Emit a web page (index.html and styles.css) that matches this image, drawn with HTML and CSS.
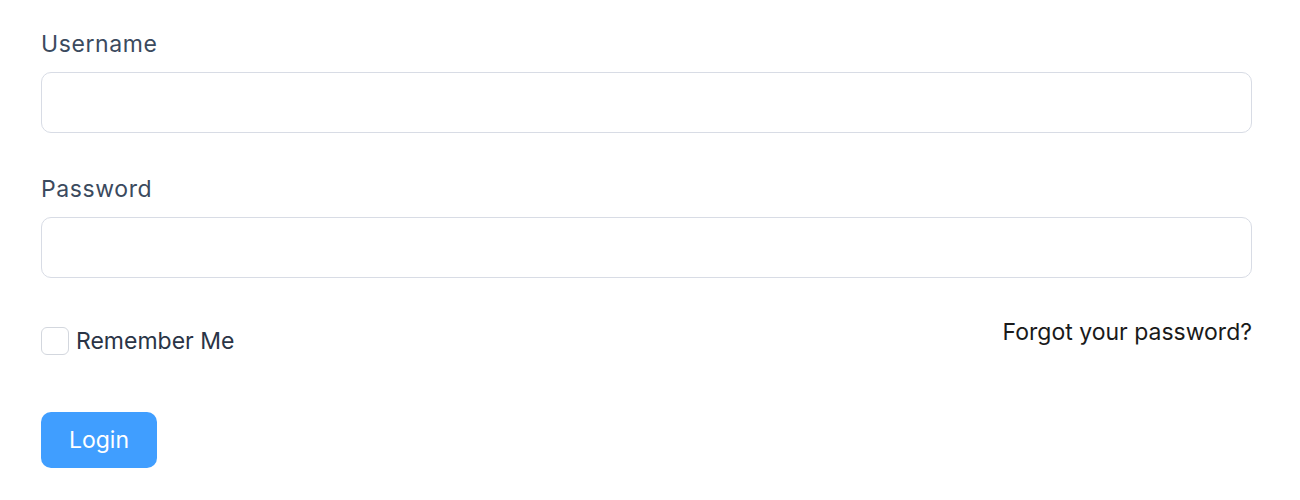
FILE: index.html
```html
<!DOCTYPE html>
<html>
<head>
<meta charset="utf-8">
<link rel="stylesheet" href="styles.css">
</head>
<body>
<form class="login">
  <div class="field">
    <label class="label">Username</label>
    <input class="input" type="text">
  </div>
  <div class="field">
    <label class="label">Password</label>
    <input class="input" type="password">
  </div>
  <div class="row">
    <label class="remember"><span class="box"></span><span>Remember Me</span></label>
    <a class="forgot">Forgot your password?</a>
  </div>
  <button class="btn" type="button">Login</button>
</form>
</body>
</html>
```
FILE: styles.css
```css
html, body { margin: 0; padding: 0; background: #fff; }
body { font-family: Inter, "Liberation Sans", sans-serif; }
.login { width: 1211px; padding: 29px 0 0 41px; display: flex; flex-direction: column; }
.field { display: flex; flex-direction: column; margin-bottom: 41px; }
.field:nth-child(2) { margin-bottom: 39px; }
.label { font-size: 23px; line-height: 30px; color: #3b4a5e; margin-bottom: 13px; letter-spacing: 0.6px; }
.input { box-sizing: border-box; height: 61px; width: 100%; border: 1px solid #d8dce5; border-radius: 10px; margin: 0; background: #fff; }
.row { display: flex; justify-content: space-between; align-items: flex-start; height: 95px; }
.remember { display: flex; align-items: center; gap: 7px; font-size: 23px; color: #2a3446; margin-top: 10px; }
.box { width: 28px; height: 28px; box-sizing: border-box; border: 1px solid #d3d7de; border-radius: 6px; background: #fff; }
.forgot { font-size: 23px; line-height: 30px; color: #1a1a1a; }
.btn { width: 116px; height: 56px; background: #409eff; color: #fff; border: none; border-radius: 10px; font-family: inherit; font-size: 23px; padding: 0; }
```
